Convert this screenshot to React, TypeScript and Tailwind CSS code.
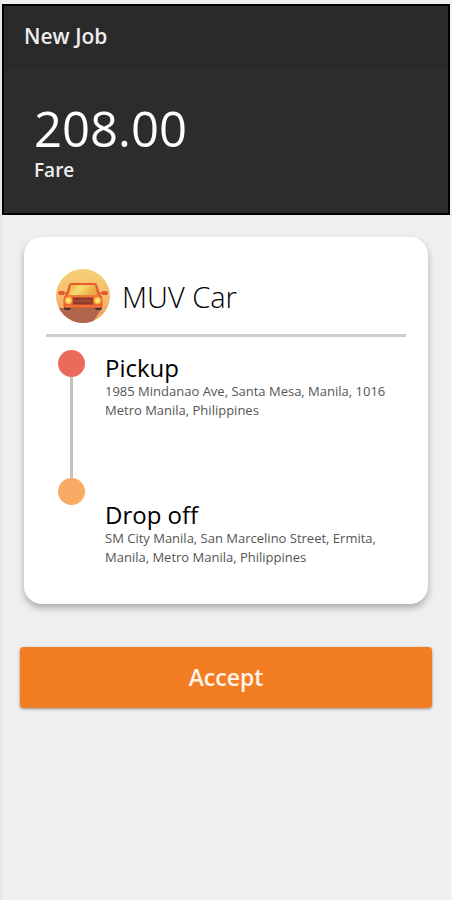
import React from 'react';

interface Stop {
  title: string;
  address: string;
}

interface JobCardProps {
  service: string;
  stops: Stop[];
}

const CarIcon: React.FC = () => (
  <svg className="size-[54px] shrink-0" viewBox="0 0 54 54" fill="none" aria-hidden="true">
    <defs>
      <linearGradient id="sky" x1="0" y1="0" x2="0" y2="1">
        <stop offset="0" stopColor="#f6cf74" />
        <stop offset="0.5" stopColor="#f5bd70" />
        <stop offset="1" stopColor="#f29a62" />
      </linearGradient>
      <linearGradient id="glass" x1="0" y1="0" x2="1" y2="0.3">
        <stop offset="0" stopColor="#e8a93c" />
        <stop offset="0.45" stopColor="#f8dc72" />
        <stop offset="1" stopColor="#eba63f" />
      </linearGradient>
      <radialGradient id="lamp">
        <stop offset="0" stopColor="#fff6a0" />
        <stop offset="0.6" stopColor="#fdcf50" />
        <stop offset="1" stopColor="#f58a35" />
      </radialGradient>
      <clipPath id="disc">
        <circle cx="27" cy="27" r="27" />
      </clipPath>
    </defs>
    <g clipPath="url(#disc)">
      <rect width="54" height="54" fill="url(#sky)" />
      <path d="M8 39H46L36 54H0V39Z" fill="#b0664d" />
    </g>
    {/* tyres */}
    <rect x="8" y="35" width="7" height="6" rx="2" fill="#43302c" />
    <rect x="39" y="35" width="7" height="6" rx="2" fill="#43302c" />
    {/* mirrors */}
    <path d="M2 24Q2 22 5 22H8V26H4Q2 26 2 24Z" fill="#e4572f" />
    <path d="M52 24Q52 22 49 22H46V26H50Q52 26 52 24Z" fill="#e4572f" />
    <path d="M7 24H12M42 24H47" stroke="#e4572f" strokeWidth="1.500" />
    {/* body */}
    <path d="M13 15.500Q13.500 14 15 14H39Q40.500 14 41 15.500L44 25Q46.500 27 46.500 30V37Q46.500 39 44 39H10Q7.500 39 7.500 37V30Q7.500 27 10 25Z" fill="#e85d2e" />
    <path d="M15 16H39L41.500 26H12.500Z" fill="url(#glass)" />
    <path d="M11 27H43" stroke="#f58a45" strokeWidth="1.500" />
    <rect x="17" y="28.500" width="20" height="7" rx="1" fill="#8e3d2c" />
    <path d="M18 32H36" stroke="#c2553a" strokeWidth="1" />
    <path d="M9 37H45" stroke="#f07a3c" strokeWidth="1.500" />
    <circle cx="12.500" cy="31.500" r="4" fill="url(#lamp)" />
    <circle cx="41.500" cy="31.500" r="4" fill="url(#lamp)" />
  </svg>
);

const JobCard: React.FC<JobCardProps> = ({ service, stops }) => {
  return (
    <section className="mx-[22px] mt-[22px] rounded-[18px] bg-white px-[22px] pt-8 pb-[37px] shadow-[0_4px_7px_rgba(0,0,0,0.28)]">
      <div className="flex items-center gap-3 border-b-3 border-[#cdcdcd] px-[10px] pb-[11px]">
        <CarIcon />
        <h2 className="pt-[2px] text-[29px] leading-9 font-light text-black">{service}</h2>
      </div>
      <div className="flex gap-5 pt-[13px] pl-3">
        <div className="flex h-[155px] shrink-0 flex-col items-center">
          <span className="size-[27px] rounded-full bg-[#eb6a5b]" />
          <span className="w-[3px] flex-1 bg-[#c5c3b8]" />
          <span className="size-[27px] rounded-full bg-[#f8ab64]" />
        </div>
        <ul className="flex flex-1 flex-col gap-[81px] pt-1">
          {stops.map((stop) => (
            <li key={stop.title}>
              <h3 className="text-2xl leading-7 text-black">{stop.title}</h3>
              <p className="text-[13px] leading-[19px] text-[#555]">{stop.address}</p>
            </li>
          ))}
        </ul>
      </div>
    </section>
  );
};

const stops: Stop[] = [
  { title: 'Pickup', address: '1985 Mindanao Ave, Santa Mesa, Manila, 1016 Metro Manila, Philippines' },
  { title: 'Drop off', address: 'SM City Manila, San Marcelino Street, Ermita, Manila, Metro Manila, Philippines' },
];

export default function App() {
  return (
    <main className="min-h-screen border-x-2 border-l-[#e6e6e6] border-r-[#f4f4f4] bg-[#efefef] pt-1 font-['Open_Sans',sans-serif]">
      <header className="border-2 border-black bg-[#2c2c2c] text-[#eeeeee]">
        <h1 className="border-b border-[#262626] bg-[#2a2a2a] px-5 pt-4 pb-[17px] text-[21px] leading-7 font-semibold">New Job</h1>
        <div className="px-[30px] pt-8 pb-[29px]">
          <p className="text-[49px] leading-[56px] text-white">208.00</p>
          <p className="text-[19px] leading-7 font-semibold">Fare</p>
        </div>
      </header>
      <JobCard service="MUV Car" stops={stops} />
      <div className="px-[18px] pt-[43px] pb-8">
        <button
          type="button"
          className="h-[61px] w-full rounded bg-[#f37d23] text-[23px] font-semibold text-[#fff3e8] shadow-[0_1px_3px_rgba(0,0,0,0.4)]"
        >
          Accept
        </button>
      </div>
    </main>
  );
}
